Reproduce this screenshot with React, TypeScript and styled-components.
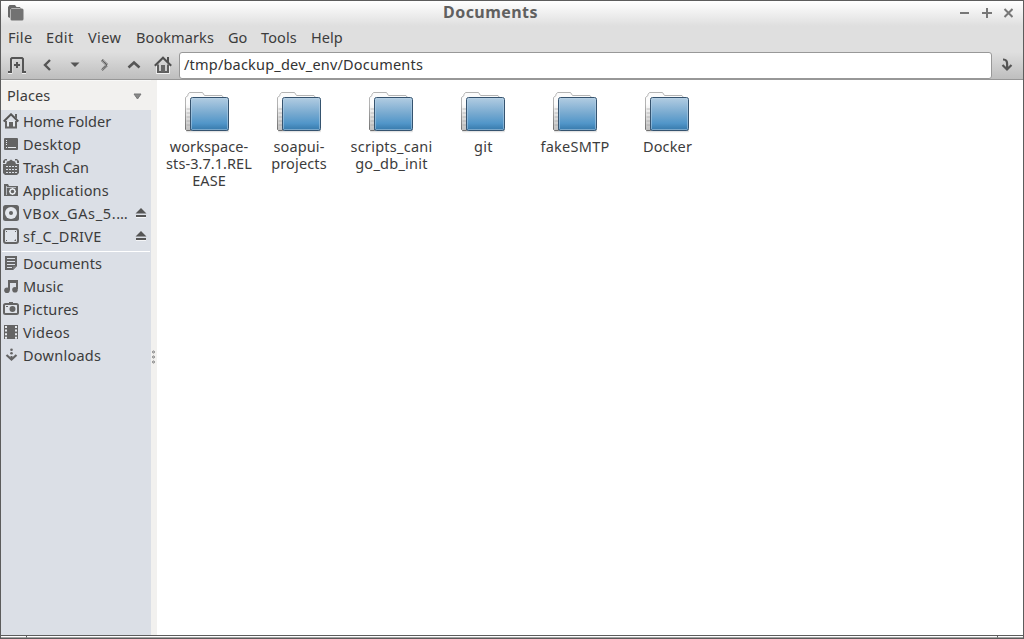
import React from "react";
import styled, { createGlobalStyle } from "styled-components";

const GlobalStyle = createGlobalStyle`
  *, *::before, *::after { box-sizing: border-box; }
  body { margin: 0; overflow: hidden; }
`;

const Frame = styled.div`
  width: 1024px;
  height: 639px;
  display: flex;
  flex-direction: column;
  border: 1px solid #5c5c5c;
  background: #fff;
  color: #3c3c3c;
  font-family: "Noto Sans", "Open Sans", sans-serif;
  font-size: 14.5px;
  overflow: hidden;
`;

const TitleBar = styled.header`
  display: grid;
  grid-template-columns: 64px 1fr 64px;
  align-items: center;
  height: 25px;
  flex: none;
  padding: 0 10px 0 6px;
  background: linear-gradient(#ffffff, #dfdfdf);
`;

const AppIcon = styled.svg`
  margin-bottom: 3px;
`;

const Title = styled.h1`
  margin: 0;
  padding-right: 39px;
  padding-bottom: 3px;
  text-align: center;
  font-size: 16px;
  letter-spacing: 0.45px;
  line-height: 22px;
  font-weight: 700;
  color: #606060;
`;

const Controls = styled.div`
  display: flex;
  justify-content: flex-end;
  padding-bottom: 2px;
`;

const MenuBar = styled.nav`
  display: flex;
  height: 26px;
  flex: none;
  padding-left: 7px;
  gap: 14px;
  background: #dfdfdf;
  line-height: 23px;
`;

const MenuItem = styled.span<{ $width: number; $spacing?: number }>`
  width: ${(p) => p.$width}px;
  letter-spacing: ${(p) => p.$spacing ?? 0}px;
  white-space: nowrap;
`;

const Toolbar = styled.div`
  display: flex;
  height: 28px;
  flex: none;
  background: linear-gradient(#dfdfdf, #bebebe);
  border-bottom: 1px solid #979797;
`;

const ToolIcon = styled.span<{ $width: number }>`
  display: flex;
  justify-content: center;
  align-items: center;
  width: ${(p) => p.$width}px;
  height: 25px;
`;

const PathField = styled.div`
  width: 813px;
  height: 27px;
  padding-left: 4px;
  border: 1px solid #989898;
  border-radius: 3px;
  background: #fff;
  line-height: 23px;
  letter-spacing: 0.2px;
  color: #333;
`;

const Body = styled.div`
  display: flex;
  flex: 1;
  min-height: 0;
`;

const Sidebar = styled.aside`
  display: flex;
  flex-direction: column;
  width: 150px;
  background: #dbdfe6;
`;

const PlacesHeader = styled.div`
  display: flex;
  justify-content: space-between;
  align-items: center;
  height: 30px;
  flex: none;
  padding: 0 9px 0 6px;
  background: #f2f1ef;
  border-top: 1px solid #f8f8f7;
`;

const HeaderText = styled.span`
  padding-bottom: 2px;
  letter-spacing: 0.1px;
`;

const HeaderArrow = styled.svg`
  margin-top: 2px;
`;

const Splitter = styled.div`
  display: flex;
  align-items: center;
  justify-content: center;
  width: 6px;
  background: #f2f1ef;
  padding: 0 1px 1px 0;
`;

const Grip = styled.svg`
  flex: none;
`;

const PlaceRow = styled.div`
  display: flex;
  align-items: center;
  height: 23px;
  padding: 0 4px 0 2px;
`;

const PlaceGlyph = styled.svg`
  flex: none;
  margin-bottom: 1px;
`;

const PlaceName = styled.span<{ $spacing?: number }>`
  flex: 1;
  padding-left: 4px;
  line-height: 23px;
  white-space: nowrap;
  letter-spacing: ${(p) => p.$spacing ?? 0}px;
`;

const Divider = styled.hr`
  flex: none;
  width: 148px;
  height: 1px;
  margin: 3px 1px 0;
  border: 0;
  background: #fff;
`;

const FileGrid = styled.main`
  display: flex;
  flex: 1;
  align-items: flex-start;
  padding: 12px 0 0 4px;
  background: #fff;
`;

const FileItem = styled.figure`
  display: flex;
  flex-direction: column;
  align-items: center;
  width: 92px;
  margin: 0;
`;

const FileName = styled.figcaption<{ $indent?: number; $spacing?: number }>`
  margin-top: 3px;
  padding-left: ${(p) => p.$indent ?? 0}px;
  text-align: center;
  line-height: 17px;
  letter-spacing: ${(p) => p.$spacing ?? 0}px;
  white-space: pre;
`;

const BottomEdge = styled.footer`
  display: grid;
  grid-template-columns: 26px 1fr 25px;
  height: 3px;
  flex: none;
  border-top: 1px solid #5c5c5c;
`;

const EdgePart = styled.div<{ $tick?: boolean }>`
  border-bottom: 1px solid #a3a3a3;
  border-right: ${(p) => (p.$tick ? "1px solid #5c5c5c" : "0")};
`;

const G = "#646464";
const LIGHT = "#e4e8ed";

const HomeIcon = () => (
  <svg width="18" height="18" viewBox="0 0 18 18">
    <path d="M3 10v7.500h12v-7.500" fill="none" stroke="#f2f2f2" strokeWidth="1.6" />
    <path d="M4 8.500v7.500h10V8.500" fill="none" stroke="#5e5e5e" strokeWidth="2" />
    <path d="M.8 9.700 9 1.700l8.200 8" fill="none" stroke="#4f4f4f" strokeWidth="2.100" />
    <path d="M13 1h2v6l-2-2z" fill="#4f4f4f" />
    <path d="M7 9h4v7H7z" fill="#666" />
  </svg>
);

const placeIcons: Record<string, React.ReactNode> = {
  home: (
    <>
      <path d="M3 8v6.500h10V8" fill={LIGHT} stroke={G} strokeWidth="2" />
      <path d="M.7 8.500 8 1.300l7.300 7.200" fill="none" stroke="#555" strokeWidth="2" />
      <path d="M12 1h2v5l-2-2zM6 9h4v6H6z" fill={G} />
    </>
  ),
  desktop: (
    <>
      <rect x="1" y="2" width="14" height="12" rx="1" fill={G} />
      <path d="M3 4h1v1H3zM3 6h1v1H3zM3 8h1v1H3zM3 11h1v1H3zM5 11h8v1H5z" fill="#e8ebef" />
    </>
  ),
  trash: (
    <>
      <path d="M0 4V2l2-2h2v1.500H2V4zM16 4V2l-2-2h-2v1.500h2V4z" fill={G} />
      <path d="M3 5 4 2.500 6 2l2-1.500L10 2l2 .5 1 2.500z" fill={G} />
      <path d="M0 5h16v9l-2 2H2l-2-2z" fill={G} />
      <path d="M3 7.500h11M3 10.500h11M3 13.500h11" stroke="#dbdfe6" strokeDasharray="2 1" />
    </>
  ),
  apps: (
    <>
      <path d="M1 14V2h4l1 2h9v10z" fill={G} />
      <path d="M3.500 4v9M3 5.500h10" stroke="#cdd1d7" strokeWidth=".8" />
      <circle cx="9.500" cy="9.500" r="2.500" fill="none" stroke="#e8ebef" strokeWidth="1.400" />
      <path d="M9.500 6v1M9.500 12v1M6 9.500h1M12 9.500h1" stroke="#e8ebef" />
    </>
  ),
  disc: (
    <>
      <rect width="16" height="16" rx="2.500" fill={G} />
      <circle cx="8" cy="8" r="6" fill="#e4e7ec" />
      <circle cx="8" cy="8" r="2" fill={G} />
    </>
  ),
  drive: (
    <>
      <rect x="1" y="1" width="14" height="14" rx="2" fill="#dfe3e9" stroke={G} strokeWidth="2" />
      <path d="M3 3h1v1H3zM12 3h1v1h-1zM3 12h1v1H3zM11 13l2-2v2z" fill={G} />
    </>
  ),
  document: (
    <>
      <path d="M2 1h12v10l-4 4H2z" fill={G} />
      <path d="M4 3.500h8M4 6.500h8M4 9.500h8M4 12.500h5" stroke="#dbdfe6" />
      <path d="M10 15v-4h4z" fill="#777" />
    </>
  ),
  music: (
    <>
      <path d="M6 12V3.500h8V11" fill="none" stroke={G} strokeWidth="2" />
      <path d="M5 2h10v3H5z" fill={G} />
      <circle cx="4" cy="12.300" r="2.800" fill={G} />
      <circle cx="12" cy="11.800" r="2.800" fill={G} />
    </>
  ),
  camera: (
    <>
      <path d="M6 1h4v2H6z" fill={G} />
      <rect x="1" y="3" width="14" height="10" rx="1.500" fill="#dfe3e9" stroke={G} strokeWidth="2" />
      <path d="M3 5h2v1H3z" fill={G} />
      <circle cx="9.500" cy="8" r="3" fill={G} />
    </>
  ),
  video: (
    <>
      <path d="M1 1h14v14H1z" fill={G} />
      <path d="M3 2v13M13 2v13" stroke="#e8ebef" strokeWidth="2" strokeDasharray="2 1.600" />
    </>
  ),
  download: (
    <>
      <circle cx="8.500" cy="2.800" r="1.300" fill={G} />
      <circle cx="8.500" cy="6.300" r="1.300" fill={G} />
      <path d="m3.500 8 5 4.500 5-4.500" fill="none" stroke={G} strokeWidth="2.200" />
      <path d="M7.500 9h2v3.500h-2z" fill={G} />
    </>
  ),
};

const PlaceIcon = ({ name }: { name: string }) => (
  <PlaceGlyph width="16" height="16" viewBox="0 0 16 16">{placeIcons[name]}</PlaceGlyph>
);

const EjectIcon = () => (
  <svg width="12" height="13" viewBox="0 0 12 13">
    <path d="M6 1 11.500 6.500H.5zM1 8h10v2H1z" fill="#555" />
    <path d="M1 10.500h10" stroke="#f4f5f7" />
  </svg>
);

const FolderIcon = () => (
  <svg width="48" height="43" viewBox="0 0 48 43">
    <defs>
      <linearGradient id="blue" x1="0" y1="0" x2="0" y2="1">
        <stop offset="0" stopColor="#b3cde2" />
        <stop offset=".5" stopColor="#75a8cf" />
        <stop offset=".78" stopColor="#5196c9" />
        <stop offset="1" stopColor="#3577a9" />
      </linearGradient>
      <linearGradient id="back" x1="0" y1="0" x2="0" y2="1">
        <stop offset=".3" stopColor="#fcfcfc" />
        <stop offset="1" stopColor="#c0c0c0" />
      </linearGradient>
      <linearGradient id="edge" x1="0" y1="0" x2="0" y2="1">
        <stop offset=".3" stopColor="#b4b4b4" />
        <stop offset="1" stopColor="#707070" />
      </linearGradient>
      <linearGradient id="shade" x1="0" y1="0" x2="0" y2="1">
        <stop offset="0" stopColor="#777" stopOpacity=".65" />
        <stop offset="1" stopColor="#999" stopOpacity="0" />
      </linearGradient>
    </defs>
    <rect x="3" y="37" width="43" height="4" rx="2" fill="url(#shade)" />
    <path d="M2.500 37.500V5.500L5 3.500V2.300L6.500.5h13l2 3H39l1.500 2v4h-33v29H3.500z" fill="url(#back)" stroke="url(#edge)" />
    <path d="M3.500 17H7M3.500 21H7M3.500 25H7M3.500 29H7M3.500 33H7" stroke="#999" strokeOpacity=".35" strokeWidth="1.500" />
    <rect x="7.500" y="5.500" width="38" height="33" rx="2" fill="url(#blue)" stroke="#35536f" />
    <rect x="8.500" y="6.500" width="36" height="31" rx="1" fill="none" stroke="#b9d4e8" strokeOpacity=".5" />
  </svg>
);

type Place = { icon: string; name: string; spacing?: number; eject?: boolean };

const places: Place[] = [
  { icon: "home", name: "Home Folder" },
  { icon: "desktop", name: "Desktop", spacing: 0.25 },
  { icon: "trash", name: "Trash Can", spacing: -0.15 },
  { icon: "apps", name: "Applications", spacing: 0.22 },
  { icon: "disc", name: "VBox_GAs_5.…", spacing: 0.65, eject: true },
  { icon: "drive", name: "sf_C_DRIVE", spacing: 0.35, eject: true },
];

const bookmarks: Place[] = [
  { icon: "document", name: "Documents", spacing: 0.1 },
  { icon: "music", name: "Music", spacing: 0.15 },
  { icon: "camera", name: "Pictures", spacing: 0.15 },
  { icon: "video", name: "Videos", spacing: 0.3 },
  { icon: "download", name: "Downloads", spacing: 0.25 },
];

const menus = [
  { name: "File", width: 24, spacing: 0.3 },
  { name: "Edit", width: 28, spacing: 0.4 },
  { name: "View", width: 34, spacing: 0.4 },
  { name: "Bookmarks", width: 78, spacing: 0.1 },
  { name: "Go", width: 19 },
  { name: "Tools", width: 36, spacing: 0.1 },
  { name: "Help", width: 32 },
];

const files = [
  { lines: ["workspace-", "sts-3.7.1.REL", "EASE"], indent: 4, spacing: 0.06 },
  { lines: ["soapui-", "projects"], indent: 0, spacing: 0.15 },
  { lines: ["scripts_cani", "go_db_init"], indent: 1, spacing: 0.25 },
  { lines: ["git"], indent: 1, spacing: 0.3 },
  { lines: ["fakeSMTP"], indent: 0, spacing: 0.25 },
  { lines: ["Docker"], indent: 1, spacing: 0.15 },
];

const PlaceList = ({ items }: { items: Place[] }) => (
  <>
    {items.map((p) => (
      <PlaceRow key={p.name}>
        <PlaceIcon name={p.icon} />
        <PlaceName $spacing={p.spacing}>{p.name}</PlaceName>
        {p.eject && <EjectIcon />}
      </PlaceRow>
    ))}
  </>
);

export default function App() {
  return (
    <>
      <GlobalStyle />
      <Frame>
        <TitleBar>
          <AppIcon width="18" height="20" viewBox="0 0 18 20">
            <path d="M1 15V5l1.500-2H8l1.500 2H13l1 2v9H3z" fill="#686868" />
            <rect x="3.500" y="6.500" width="13" height="12" rx="1.500" fill="#727272" />
            <path d="M3.500 17V7.500l1-1h9" fill="none" stroke="#b5b5b5" />
          </AppIcon>
          <Title>Documents</Title>
          <Controls>
            <svg width="58" height="16" viewBox="0 0 58 16">
              <path d="M5 8h9M27 8h10M32 3v10" stroke="#777" strokeWidth="2" />
              <path d="m49.500 4 8 8m0-8-8 8" stroke="#777" strokeWidth="2" />
            </svg>
          </Controls>
        </TitleBar>
        <MenuBar>
          {menus.map((m) => (
            <MenuItem key={m.name} $width={m.width} $spacing={m.spacing}>{m.name}</MenuItem>
          ))}
        </MenuBar>
        <Toolbar>
          <ToolIcon $width={32}>
            <svg width="20" height="18" viewBox="0 0 20 18">
              <path d="M1 17.500h4v-13M19 17.500h-4" fill="none" stroke="#f0f0f0" />
              <path d="M1 16h3V3l1-1h10l1 1v13h3" fill="none" stroke="#555" strokeWidth="2" />
              <path d="M7 9h6M10 6v6" stroke="#555" strokeWidth="2" />
            </svg>
          </ToolIcon>
          <ToolIcon $width={28}>
            <svg width="10" height="12" viewBox="0 0 10 12"><path d="M8 1 3 6l5 5" fill="none" stroke="#555" strokeWidth="2.400" /></svg>
          </ToolIcon>
          <ToolIcon $width={27}>
            <svg width="10" height="6" viewBox="0 0 10 6"><path d="M.5.5h9L5 5z" fill="#555" /></svg>
          </ToolIcon>
          <ToolIcon $width={34}>
            <svg width="10" height="12" viewBox="0 0 10 12"><path d="m2 1 5 5-5 5" fill="none" stroke="#555" strokeWidth="2.600" strokeDasharray="1 .5" /></svg>
          </ToolIcon>
          <ToolIcon $width={24}>
            <svg width="14" height="9" viewBox="0 0 14 9"><path d="m1.500 7.500 5.500-5 5.500 5" fill="none" stroke="#555" strokeWidth="2.600" /></svg>
          </ToolIcon>
          <ToolIcon $width={33}><HomeIcon /></ToolIcon>
          <PathField>/tmp/backup_dev_env/Documents</PathField>
          <ToolIcon $width={29}>
            <svg width="12" height="14" viewBox="0 0 12 14"><path d="M2 1.500c4 0 4.500 2 4 9.500M1.500 7 6 11.500 10.500 7" fill="none" stroke="#555" strokeWidth="2.200" /></svg>
          </ToolIcon>
        </Toolbar>
        <Body>
          <Sidebar>
            <PlacesHeader>
              <HeaderText>Places</HeaderText>
              <HeaderArrow width="9" height="7" viewBox="0 0 9 7"><path d="M1 1h7L4.500 6z" fill="#888" stroke="#777" /></HeaderArrow>
            </PlacesHeader>
            <PlaceList items={places} />
            <Divider />
            <PlaceList items={bookmarks} />
          </Sidebar>
          <Splitter>
            <Grip width="4" height="14" viewBox="0 0 4 14">
              <g fill="#fff" stroke="#777"><circle cx="1.500" cy="2" r="1" /><circle cx="1.500" cy="7" r="1" /><circle cx="1.500" cy="12" r="1" /></g>
            </Grip>
          </Splitter>
          <FileGrid>
            {files.map((f) => (
              <FileItem key={f.lines[0]}>
                <FolderIcon />
                <FileName $indent={f.indent} $spacing={f.spacing}>{f.lines.join("\n")}</FileName>
              </FileItem>
            ))}
          </FileGrid>
        </Body>
        <BottomEdge>
          <EdgePart $tick />
          <EdgePart $tick />
          <EdgePart />
        </BottomEdge>
      </Frame>
    </>
  );
}
